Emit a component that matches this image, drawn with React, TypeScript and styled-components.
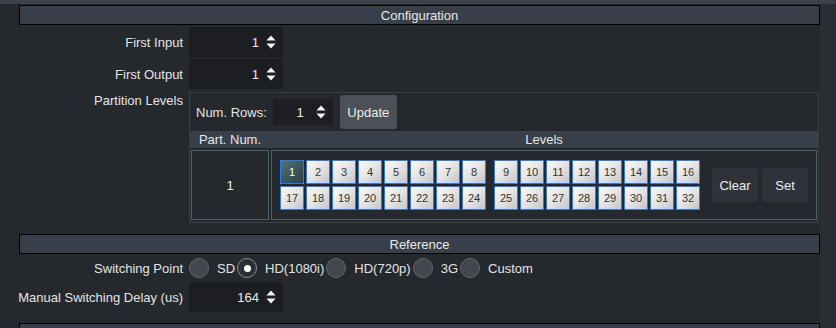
import React from 'react';
import styled, { createGlobalStyle } from 'styled-components';

const Global = createGlobalStyle`
  html, body { margin: 0; padding: 0; background: #25282d; }
  body {
    font-family: "Liberation Sans", Arial, sans-serif;
    font-size: 13px;
    color: #e4e4e4;
  }
  * { box-sizing: border-box; }
`;

const Screen = styled.div`
  width: 836px;
  height: 328px;
  display: flex;
  flex-direction: column;
  overflow: hidden;
  background: #25282d;
`;

const TopStrip = styled.div`
  height: 4px;
  flex: none;
  background: #3d414a;
`;

const Body = styled.div`
  flex: 1;
  display: flex;
  min-height: 0;
`;

const Main = styled.div`
  width: 820px;
  flex: none;
  padding: 1px 0 0 19px;
  display: flex;
  flex-direction: column;
`;

const Side = styled.div`
  flex: 1;
  background: #2a2d32;
`;

const SectionHeader = styled.div<{ $mt?: number }>`
  height: 20px;
  flex: none;
  margin-top: ${(p) => p.$mt ?? 0}px;
  border: 1px solid #000;
  background: #383f4a;
  display: flex;
  align-items: center;
  justify-content: center;
  color: #e8e8e8;
`;

const Form = styled.div`
  display: grid;
  grid-template-columns: 164px 1fr;
  column-gap: 6px;
  row-gap: 2px;
  margin-top: 2px;
`;

const Label = styled.div<{ $top?: boolean }>`
  display: flex;
  justify-content: flex-end;
  align-items: ${(p) => (p.$top ? 'flex-start' : 'center')};
  padding-top: ${(p) => (p.$top ? '2px' : '0')};
  white-space: nowrap;
  color: #e4e4e4;
`;

const Control = styled.div`
  display: flex;
  align-items: center;
`;

const SpinBoxWrap = styled.div<{ $w: number; $h: number; $gap: number }>`
  width: ${(p) => p.$w}px;
  height: ${(p) => p.$h}px;
  background: #1c1e21;
  display: flex;
  align-items: center;
  justify-content: flex-end;
  gap: ${(p) => p.$gap}px;
  padding-right: 7px;
  color: #ececec;
`;

const Arrows = () => (
  <svg width="10" height="14" viewBox="0 0 10 14">
    <path d="M5 0.5 L9.6 5.6 L0.4 5.6 Z" fill="#f2f2f2" />
    <path d="M5 13.5 L9.6 8.4 L0.4 8.4 Z" fill="#f2f2f2" />
  </svg>
);

const SpinBox = ({ value, w = 94, h = 30, gap = 7 }: { value: string; w?: number; h?: number; gap?: number }) => (
  <SpinBoxWrap $w={w} $h={h} $gap={gap}>
    <span>{value}</span>
    <Arrows />
  </SpinBoxWrap>
);

const Frame = styled.div`
  margin-top: 1px;
  width: 630px;
  border: 1px solid #3a3f46;
  display: flex;
  flex-direction: column;
  padding-bottom: 2px;
`;

const FrameTop = styled.div`
  height: 38px;
  display: flex;
  align-items: center;
  padding-left: 6px;
  gap: 6px;
`;

const UpdateButton = styled.div`
  margin-left: 1px;
  width: 57px;
  height: 34px;
  border-radius: 4px;
  background: #4b5059;
  display: flex;
  align-items: center;
  justify-content: center;
  color: #ececec;
`;

const TableHead = styled.div`
  height: 17px;
  background: #383f4a;
  display: grid;
  grid-template-columns: 78px 1fr;
  column-gap: 2px;
  padding: 0 1px;
  align-items: center;
  text-align: center;
  color: #e6e6e6;
`;

const TableRow = styled.div`
  margin-top: 2px;
  display: grid;
  grid-template-columns: 78px 1fr;
  column-gap: 2px;
  padding: 0 1px;
  height: 70px;
`;

const Cell = styled.div`
  border: 1px solid #48646b;
  display: flex;
  align-items: center;
`;

const PartCell = styled(Cell)`
  justify-content: center;
  color: #f0f0f0;
`;

const LevelsCell = styled(Cell)`
  padding-left: 8px;
`;

const LevelGroups = styled.div`
  display: flex;
  gap: 8px;
`;

const LevelGrid = styled.div`
  display: grid;
  grid-template-columns: repeat(8, 24px);
  grid-auto-rows: 24px;
  gap: 2px;
`;

const LevelButton = styled.div<{ $on?: boolean }>`
  border: 1px solid #3079ec;
  background: ${(p) =>
    p.$on
      ? 'linear-gradient(135deg, #547279 0%, #3d5960 50%, #2c4248 100%)'
      : 'linear-gradient(135deg, #fafafa 0%, #e4e4e4 50%, #c6c6c6 100%)'};
  color: ${(p) => (p.$on ? '#ffffff' : '#333333')};
  font-size: 11px;
  display: flex;
  align-items: center;
  justify-content: center;
`;

const ActionButton = styled.div<{ $ml: number }>`
  margin-left: ${(p) => p.$ml}px;
  width: 46px;
  height: 34px;
  border-radius: 4px;
  background: #2f3339;
  display: flex;
  align-items: center;
  justify-content: center;
  color: #ececec;
`;

const RadioRow = styled.div`
  display: flex;
  align-items: center;
  gap: 2px;
  height: 24px;
`;

const Option = styled.div`
  display: flex;
  align-items: center;
  gap: 8px;
`;

const Radio = styled.div<{ $on?: boolean }>`
  width: 20px;
  height: 20px;
  border-radius: 50%;
  border: 1px solid ${(p) => (p.$on ? '#8d9096' : '#63676e')};
  background: ${(p) => (p.$on ? '#2b2f35' : '#42464d')};
  display: flex;
  align-items: center;
  justify-content: center;
  &::after {
    content: '';
    display: ${(p) => (p.$on ? 'block' : 'none')};
    width: 7px;
    height: 7px;
    border-radius: 50%;
    background: #ffffff;
  }
`;

const OptText = styled.span`
  color: #e4e4e4;
  white-space: nowrap;
`;

const levelsA = Array.from({ length: 16 }, (_, i) => (i < 8 ? i + 1 : i + 9));
const levelsB = Array.from({ length: 16 }, (_, i) => (i < 8 ? i + 9 : i + 17));

const options = ['SD', 'HD(1080i)', 'HD(720p)', '3G', 'Custom'];

export default function App() {
  return (
    <Screen>
      <Global />
      <TopStrip />
      <Body>
        <Main>
          <SectionHeader>Configuration</SectionHeader>
          <Form>
            <Label>First Input</Label>
            <Control>
              <SpinBox value="1" />
            </Control>
            <Label>First Output</Label>
            <Control>
              <SpinBox value="1" />
            </Control>
            <Label $top>Partition Levels</Label>
            <Frame>
              <FrameTop>
                <span>Num. Rows:</span>
                <SpinBox value="1" w={60} h={26} gap={12} />
                <UpdateButton>Update</UpdateButton>
              </FrameTop>
              <TableHead>
                <span>Part. Num.</span>
                <span>Levels</span>
              </TableHead>
              <TableRow>
                <PartCell>1</PartCell>
                <LevelsCell>
                  <LevelGroups>
                    <LevelGrid>
                      {levelsA.map((n) => (
                        <LevelButton key={n} $on={n === 1}>
                          {n}
                        </LevelButton>
                      ))}
                    </LevelGrid>
                    <LevelGrid>
                      {levelsB.map((n) => (
                        <LevelButton key={n}>{n}</LevelButton>
                      ))}
                    </LevelGrid>
                  </LevelGroups>
                  <ActionButton $ml={12}>Clear</ActionButton>
                  <ActionButton $ml={4}>Set</ActionButton>
                </LevelsCell>
              </TableRow>
            </Frame>
          </Form>
          <SectionHeader $mt={11}>Reference</SectionHeader>
          <Form>
            <Label>Switching Point</Label>
            <RadioRow>
              {options.map((o) => (
                <Option key={o}>
                  <Radio $on={o === 'HD(1080i)'} />
                  <OptText>{o}</OptText>
                </Option>
              ))}
            </RadioRow>
            <Label>Manual Switching Delay (us)</Label>
            <Control>
              <SpinBox value="164" />
            </Control>
          </Form>
          <SectionHeader $mt={11} />
        </Main>
        <Side />
      </Body>
    </Screen>
  );
}
